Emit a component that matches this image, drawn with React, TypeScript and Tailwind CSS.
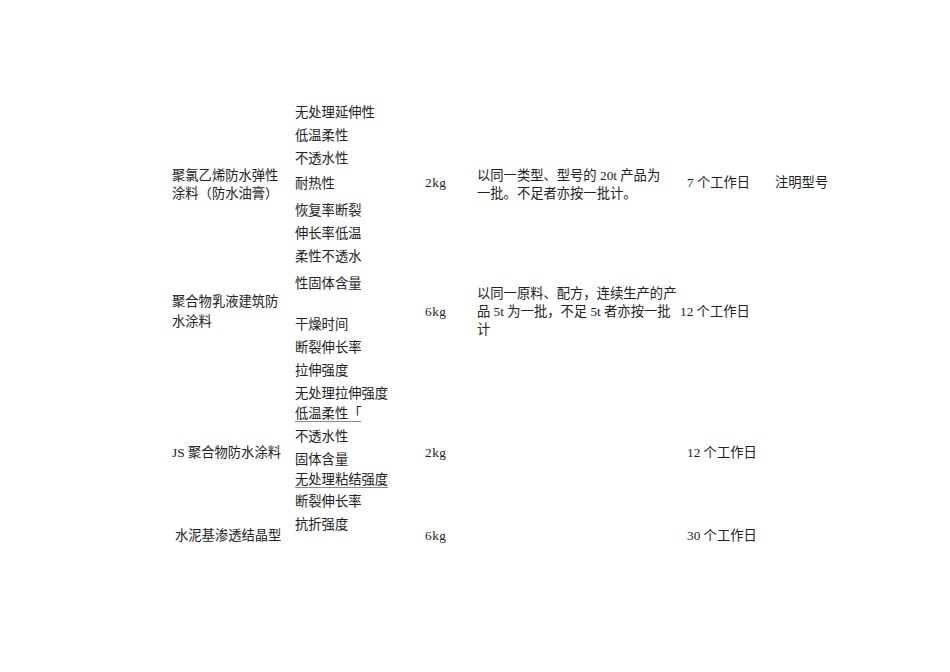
const font = "font-['Liberation_Serif','Noto_Sans_CJK_SC',serif]"

export default function App() {
  return (
    <div className={`w-[950px] h-[672px] bg-white text-[#222] text-[13.3px] ${font}`}>
      <div className="pt-[101px] pl-[172px] flex flex-col">
        {/* 聚氯乙烯 */}
        <div className="grid grid-cols-[123px_130px_52px_210px_88px_auto]">
          <div className="pt-[66px] leading-[18px]">聚氯乙烯防水弹性<br />涂料（防水油膏）</div>
          <div className="flex flex-col leading-[23px]">
            <span>无处理延伸性</span>
            <span>低温柔性</span>
            <span>不透水性</span>
            <span className="mt-[2px]">耐热性</span>
            <span className="mt-[4px]">恢复率断裂</span>
            <span>伸长率低温</span>
            <span>柔性不透水</span>
          </div>
          <div className="pt-[73px] leading-[18px] tracking-[0.5px]">2kg</div>
          <div className="pt-[66px] leading-[18px]">以同一类型、型号的 20t 产品为<br />一批。不足者亦按一批计。</div>
          <div className="pt-[73px] leading-[18px]">7 个工作日</div>
          <div className="pt-[73px] leading-[18px]">注明型号</div>
        </div>

        {/* 聚合物乳液 */}
        <div className="grid grid-cols-[123px_130px_52px_210px_88px_auto]">
          <div className="pt-[24px] leading-[20px]">聚合物乳液建筑防<br />水涂料</div>
          <div className="flex flex-col leading-[23px]">
            <span className="mt-[4px]">性固体含量</span>
            <span className="mt-[18px]">干燥时间</span>
            <span>断裂伸长率</span>
            <span>拉伸强度</span>
            <span>无处理拉伸强度</span>
          </div>
          <div className="pt-[35px] leading-[18px] tracking-[0.5px]">6kg</div>
          <div className="pt-[17px] leading-[18px] whitespace-nowrap">
            以同一原料、配方，连续生产的产<br />品 5t 为一批，不足 5t 者亦按一批<br />计
          </div>
          <div className="pt-[35px] leading-[18px] ml-[-7px]">12 个工作日</div>
          <div />
        </div>

        {/* JS */}
        <div className="grid grid-cols-[123px_130px_52px_210px_88px_auto]">
          <div className="pt-[39px] leading-[18px]">JS 聚合物防水涂料</div>
          <div className="flex flex-col">
            <span className="leading-[18px]"><span className="border-b border-[#888]">低温柔性「</span></span>
            <span className="mt-[2px] leading-[23px]">不透水性</span>
            <span className="leading-[23px]">固体含量</span>
            <span className="leading-[18px]"><span className="border-b border-[#888]">无处理粘结强度</span></span>
            <span className="mt-[1px] leading-[23px]">断裂伸长率</span>
          </div>
          <div className="pt-[39px] leading-[18px] tracking-[0.5px]">2kg</div>
          <div />
          <div className="pt-[39px] leading-[18px]">12 个工作日</div>
          <div />
        </div>

        {/* 水泥基 */}
        <div className="grid grid-cols-[123px_130px_52px_210px_88px_auto]">
          <div className="pt-[14px] pl-[3px] leading-[18px]">水泥基渗透结晶型</div>
          <div className="flex flex-col leading-[23px]">
            <span>抗折强度</span>
          </div>
          <div className="pt-[14px] leading-[18px] tracking-[0.5px]">6kg</div>
          <div />
          <div className="pt-[14px] leading-[18px]">30 个工作日</div>
          <div />
        </div>
      </div>
    </div>
  )
}
